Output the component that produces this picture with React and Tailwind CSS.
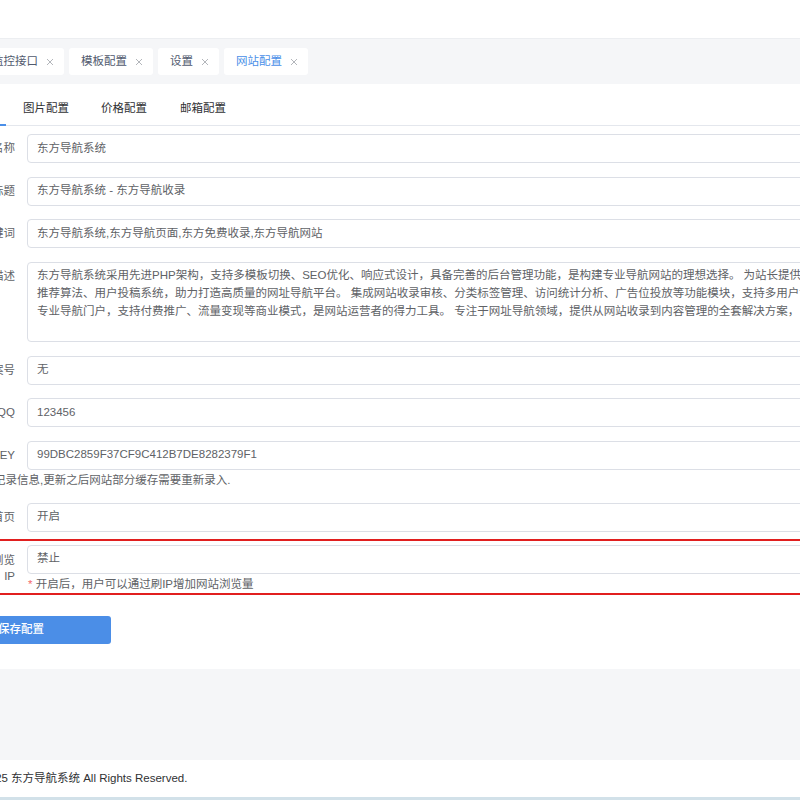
import React from "react";

const tags = [
  { name: "监控接口", first: true },
  { name: "模板配置" },
  { name: "设置" },
  { name: "网站配置", active: true },
];

const descLines = [
  "东方导航系统采用先进PHP架构，支持多模板切换、SEO优化、响应式设计，具备完善的后台管理功能，是构建专业导航网站的理想选择。 为站长提供智能化的网站管理工具，",
  "推荐算法、用户投稿系统，助力打造高质量的网址导航平台。 集成网站收录审核、分类标签管理、访问统计分析、广告位投放等功能模块，支持多用户协同管理，",
  "专业导航门户，支持付费推广、流量变现等商业模式，是网站运营者的得力工具。 专注于网址导航领域，提供从网站收录到内容管理的全套解决方案，",
];

const CloseIcon = () => (
  <svg width="8" height="8" viewBox="0 0 8 8" className="shrink-0">
    <path d="M1 1 L7 7 M7 1 L1 7" stroke="#b3b6bb" strokeWidth="1" />
  </svg>
);

const Field = ({ label, value, last }) => (
  <div className={`flex ${last ? "" : "mb-[13.5px]"}`}>
    <div className="w-[100px] shrink-0 pr-[12px] text-right leading-[29px] whitespace-nowrap overflow-hidden flex justify-end">
      <span>{label}</span>
    </div>
    <div className="flex-1 h-[29px] border border-[#dcdfe6] rounded-[4px] bg-white px-[9px] flex items-center">
      {value}
    </div>
  </div>
);

export default function App() {
  return (
    <div className="w-[800px] h-[800px] overflow-hidden flex flex-col bg-white text-[11.5px] text-[#606266] font-['Liberation_Sans','Noto_Sans_CJK_SC',sans-serif]">
      <div className="h-[38px] shrink-0 bg-white" />

      {/* tags */}
      <div className="h-[46px] shrink-0 bg-[#f5f6f8] border-t border-[#eceef1] flex items-center gap-[5px]">
        {tags.map((t) => (
          <div
            key={t.name}
            className={`h-[27px] shrink-0 bg-white rounded-[3px] pl-[12px] pr-[10px] flex items-center gap-[8px] ${
              t.first ? "ml-[-20px]" : ""
            }`}
          >
            <span className={t.active ? "text-[#4a8fe8]" : "text-[#515a6e]"}>
              {t.name}
            </span>
            <CloseIcon />
          </div>
        ))}
      </div>

      {/* main card */}
      <div className="h-[585px] shrink-0 bg-white">
        <div className="flex items-start h-[42px] border-b border-[#e4e7ed] text-[#303133]">
          <div className="ml-[-66px] w-[72px] h-[42px] pt-[14px] leading-[20px] border-b-2 border-[#4a8fe8] text-[#4a8fe8] whitespace-nowrap">
            基本配置
          </div>
          <div className="ml-[17px] h-[42px] pt-[14px] leading-[20px]">图片配置</div>
          <div className="ml-[32px] h-[42px] pt-[14px] leading-[20px]">价格配置</div>
          <div className="ml-[33px] h-[42px] pt-[14px] leading-[20px]">邮箱配置</div>
        </div>

        <div className="ml-[-73px] w-[1300px] mt-[8px]">
          <Field label="网站名称" value="东方导航系统" />
          <Field label="网站标题" value="东方导航系统 - 东方导航收录" />
          <Field label="关键词" value="东方导航系统,东方导航页面,东方免费收录,东方导航网站" />

          <div className="flex mb-[14px]">
            <div className="w-[100px] shrink-0 pr-[12px] text-right leading-[29px]">网站描述</div>
            <div className="flex-1 h-[80px] border border-[#dcdfe6] rounded-[4px] px-[9px] pt-[3px] leading-[18.3px] overflow-hidden">
              {descLines.map((l) => (
                <div key={l} className="whitespace-nowrap">
                  {l}
                </div>
              ))}
            </div>
          </div>

          <Field label="备案号" value="无" />
          <Field label="客服QQ" value="123456" />
          <Field label="授权KEY" value="99DBC2859F37CF9C412B7DE8282379F1" last />
          <div className="mt-[1px] mb-[14px] leading-[18px] ml-[67px]">
            记录信息,更新之后网站部分缓存需要重新录入.
          </div>

          <Field label="静态首页" value="开启" last />

          <div className="mt-[7px] -mx-[10px] px-[8px] border-2 border-[#e11f1f]">
            <div className="flex pt-[4px]">
              <div className="w-[100px] shrink-0 pr-[12px] text-right pt-[7px] leading-[16px]">
                防刷浏览
                <br />
                IP
              </div>
              <div className="flex-1">
                <div className="h-[29px] border border-[#dcdfe6] rounded-[4px] px-[9px] flex items-center">
                  禁止
                </div>
                <div className="mt-[1px] leading-[18px] pl-[1px]">
                  <span className="text-[#f56c6c]">*</span> 开启后，用户可以通过刷IP增加网站浏览量
                </div>
              </div>
            </div>
          </div>

          <button className="mt-[21px] ml-[4px] w-[180px] h-[28px] rounded-[3px] bg-[#4b8ee7] text-white font-medium flex items-center justify-center">
            保存配置
          </button>
        </div>
      </div>

      <div className="h-[91px] shrink-0 bg-[#f5f6f8]" />

      {/* footer */}
      <div className="h-[37px] shrink-0 bg-white flex items-center text-[#303133]">
        <div className="ml-[-192px] w-[200px] shrink-0 text-right whitespace-nowrap">
          Copyright © 2025
        </div>
        <span className="ml-[3px] whitespace-nowrap">东方导航系统 All Rights Reserved.</span>
      </div>
      <div className="h-[3px] shrink-0 bg-[#d2e1e9]" />
    </div>
  );
}
